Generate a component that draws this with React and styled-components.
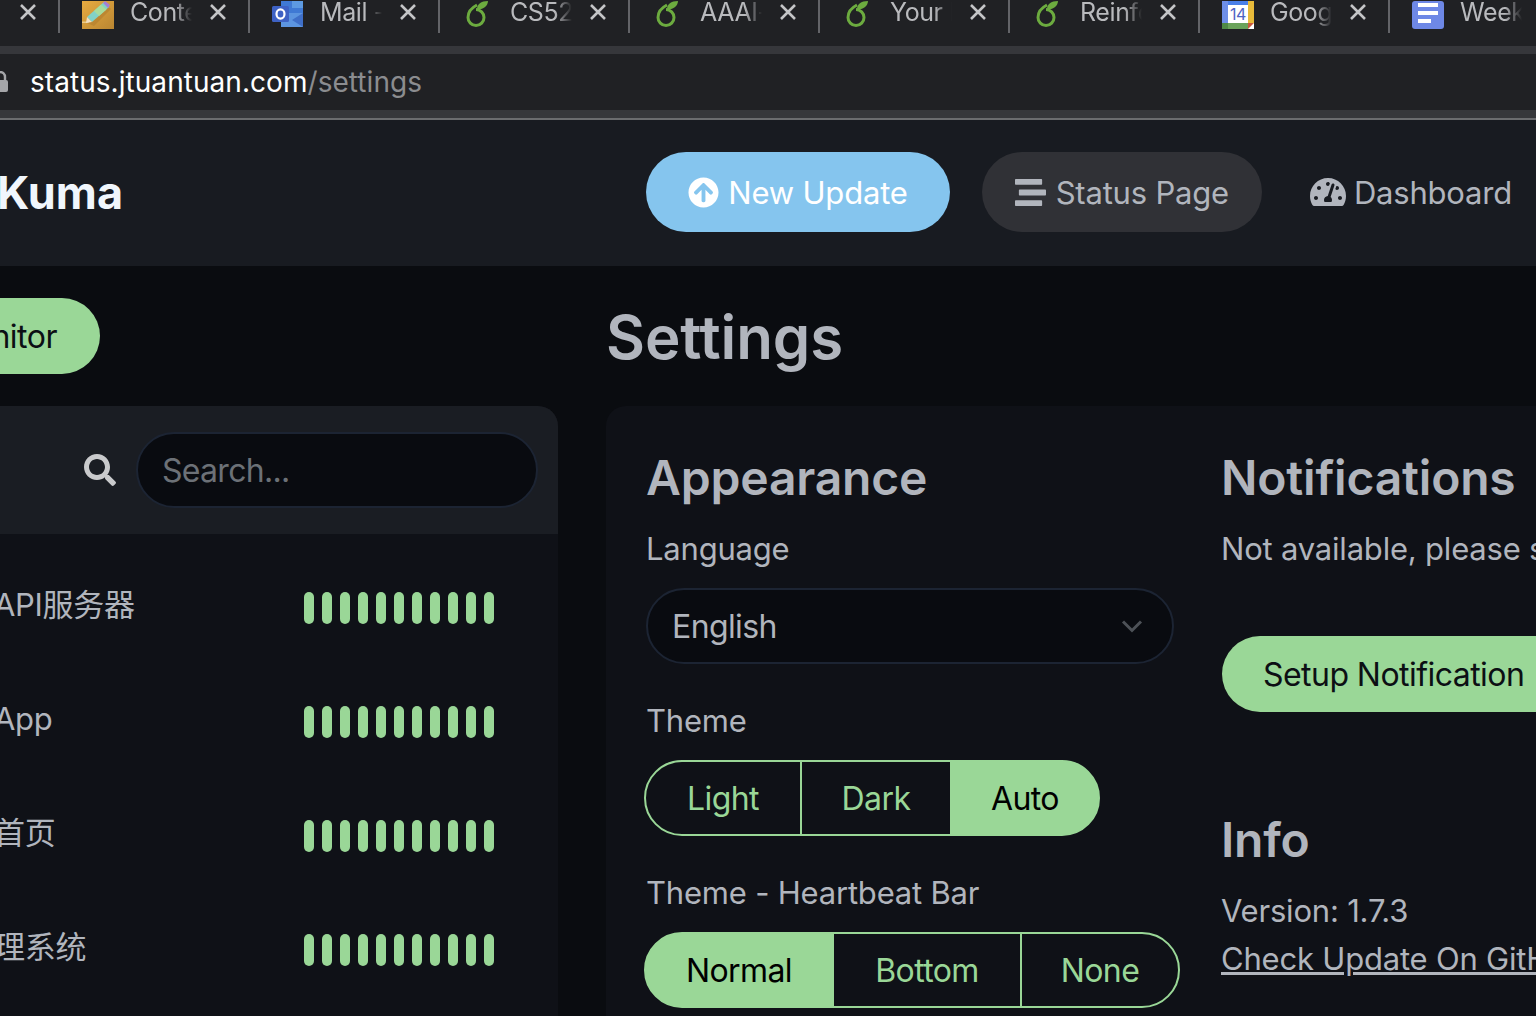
import React from "react";
import styled, { createGlobalStyle } from "styled-components";
import { FaArrowCircleUp, FaStream, FaTachometerAlt, FaSearch } from "react-icons/fa";

const GlobalStyle = createGlobalStyle`
    html, body {
        margin: 0;
        padding: 0;
        background: #0a0c10;
    }
    * {
        box-sizing: border-box;
    }
`;

const Page = styled.div`
    width: 1536px;
    height: 1016px;
    overflow: hidden;
    background: #0a0c10;
    font-family: Inter, "Noto Sans CJK SC", sans-serif;
    color: #b1b5bd;
`;

/* browser chrome */
const TabStrip = styled.div`
    height: 46px;
    background: #202124;
    display: flex;
    margin-left: -130px;
    width: 1800px;
`;

const Tab = styled.div`
    width: 190px;
    height: 33px;
    flex: none;
    display: flex;
    align-items: center;
    padding: 0 0 9px 22px;
    border-right: 2px solid #636468;
    font-size: 25px;
    letter-spacing: -0.4px;
    color: #b9babd;
`;

const TabIcon = styled.div`
    width: 32px;
    height: 32px;
    flex: none;
    margin-right: 16px;
    margin-top: 9px;
`;

const TabTitle = styled.div`
    width: 62px;
    flex: none;
    overflow: hidden;
    white-space: nowrap;
    -webkit-mask-image: linear-gradient(to right, #000 72%, transparent 100%);
    mask-image: linear-gradient(to right, #000 72%, transparent 100%);
`;

const TabClose = styled.svg`
    width: 18px;
    height: 18px;
    flex: none;
    margin-left: 17px;
`;

const Stripe = styled.div`
    height: 8px;
    background: #36373b;
`;

const UrlBar = styled.div`
    height: 56px;
    background: #202124;
    display: flex;
    align-items: center;
    padding-left: 30px;
    font-size: 28px;
    letter-spacing: 0.05px;
    color: #fff;
`;

const UrlPath = styled.span`
    color: #8b8c8f;
`;

const Lock = styled.svg`
    width: 16px;
    height: 22px;
    flex: none;
    margin-left: -38px;
    margin-right: 22px;
`;

const BottomLine = styled.div`
    height: 10px;
    background: #36373b;
    border-bottom: 2px solid #6b6c6f;
`;

/* app header */
const Header = styled.header`
    height: 146px;
    background: #181b21;
    display: flex;
    align-items: center;
    padding: 0 24px 2px 0;
`;

const Brand = styled.div`
    font-size: 45px;
    font-weight: 700;
    color: #f0f6fc;
    margin-left: -3px;
    margin-right: auto;
    letter-spacing: 0;
`;

const NavButton = styled.div`
    height: 80px;
    display: flex;
    align-items: center;
    gap: ${(p) => p.$iconGap}px;
    padding: 0 ${(p) => p.$pad}px;
    margin-left: ${(p) => p.$gap}px;
    border-radius: 40px;
    font-size: 31px;
    letter-spacing: -0.2px;
    background: ${(p) => p.$bg || "transparent"};
    color: ${(p) => p.$fg || "#b1b5bd"};
`;

/* main */
const Main = styled.main`
    display: grid;
    grid-template-columns: 558px 1fr;
    column-gap: 48px;
`;

const SideColumn = styled.div`
    display: flex;
    flex-direction: column;
`;

const AddRow = styled.div`
    height: 140px;
    padding-top: 32px;
`;

const AddButton = styled.div`
    width: 100px;
    height: 76px;
    display: flex;
    align-items: center;
    justify-content: flex-end;
    padding-right: 43px;
    border-radius: 0 38px 38px 0;
    background: #9ad797;
    color: #0c0f14;
    font-size: 32px;
    letter-spacing: -0.5px;
    white-space: nowrap;
`;

const MonitorPanel = styled.section`
    background: #0f1117;
    border-radius: 0 20px 0 0;
    height: 610px;
    overflow: hidden;
`;

const SearchBar = styled.div`
    height: 128px;
    background: #1a1d23;
    display: flex;
    align-items: center;
    justify-content: flex-end;
    padding-right: 20px;
    gap: 20px;
    color: #c9cacc;
`;

const SearchBox = styled.div`
    width: 402px;
    height: 76px;
    border-radius: 38px;
    border: 2px solid #1c2433;
    background: #090b10;
    color: #6c7177;
    font-size: 32px;
    letter-spacing: -0.7px;
    padding-left: 24px;
    display: flex;
    align-items: center;
`;

const MonitorList = styled.div`
    padding-top: 14px;
    display: flex;
    flex-direction: column;
`;

const MonitorRow = styled.div`
    height: 114px;
    display: grid;
    grid-template-columns: 304px 1fr;
    align-items: center;
    font-size: 31px;
`;

const MonitorName = styled.div`
    margin-left: -6px;
    line-height: 40px;
    letter-spacing: -0.3px;
    color: #b1b5bd;
`;

const Beats = styled.div`
    display: flex;
    gap: 8px;
    margin-top: 6px;
`;

const Beat = styled.div`
    width: 10px;
    height: 32px;
    border-radius: 5px;
    background: #9ad797;
`;

const Content = styled.div`
    min-width: 0;
`;

const PageTitle = styled.h1`
    margin: 0;
    height: 140px;
    padding-top: 33px;
    font-size: 60px;
    line-height: 76px;
    font-weight: 600;
    color: #b1b5bd;
    letter-spacing: -0.1px;
`;

const Card = styled.section`
    background: #0f1117;
    border-radius: 20px 0 0 0;
    height: 610px;
    width: 1000px;
    display: grid;
    grid-template-columns: 575px 1fr;
    padding: 40px 0 0 40px;
`;

const Column = styled.div`
    display: flex;
    flex-direction: column;
    align-items: flex-start;
`;

const Heading = styled.h2`
    margin: 0;
    font-size: 48px;
    line-height: 64px;
    font-weight: 600;
    letter-spacing: -0.2px;
    color: #b1b5bd;
    white-space: nowrap;
    margin-top: ${(p) => p.$top || 0}px;
`;

const Label = styled.div`
    font-size: 31px;
    line-height: 40px;
    letter-spacing: -0.2px;
    color: #b1b5bd;
    margin-top: ${(p) => p.$top || 0}px;
    white-space: nowrap;
`;

const Select = styled.div`
    width: 528px;
    height: 76px;
    margin-top: 19px;
    border-radius: 38px;
    border: 2px solid #1c2433;
    background: #090b10;
    color: #b1b5bd;
    font-size: 32px;
    letter-spacing: -0.6px;
    display: flex;
    align-items: center;
    justify-content: space-between;
    padding: 0 28px 0 24px;
`;

const Group = styled.div`
    display: flex;
    height: 76px;
    margin-top: 19px;
    margin-left: -2px;
`;

const Segment = styled.div`
    width: ${(p) => p.$w}px;
    display: flex;
    align-items: center;
    justify-content: center;
    font-size: 32px;
    letter-spacing: -0.6px;
    border: 2px solid #9ad797;
    margin-left: -2px;
    background: ${(p) => (p.$on ? "#9ad797" : "transparent")};
    color: ${(p) => (p.$on ? "#000" : "#9ad797")};
    &:first-child {
        margin-left: 0;
        border-radius: 38px 0 0 38px;
    }
    &:last-child {
        border-radius: 0 38px 38px 0;
    }
`;

const GreenButton = styled.div`
    height: 76px;
    width: 360px;
    margin: 67px 0 0 1px;
    border-radius: 38px;
    background: #9ad797;
    color: #0c0f14;
    font-size: 32px;
    letter-spacing: -0.55px;
    display: flex;
    align-items: center;
    padding-left: 41px;
    white-space: nowrap;
`;

const UpdateLink = styled.div`
    font-size: 31px;
    line-height: 48px;
    letter-spacing: -0.2px;
    margin-top: 4px;
    color: #b1b5bd;
    text-decoration: underline;
    white-space: nowrap;
`;

const Close = () => (
    <TabClose viewBox="0 0 18 18">
        <path d="M2 2 L16 16 M16 2 L2 16" stroke="#c4c5c7" strokeWidth="2.6" fill="none" />
    </TabClose>
);

const PencilIcon = () => (
    <svg viewBox="0 0 32 32" width="32" height="32">
        <defs>
            <linearGradient id="pencilBg" x1="0" y1="0" x2="1" y2="1">
                <stop offset="0" stopColor="#e8ab40" />
                <stop offset="1" stopColor="#b98632" />
            </linearGradient>
        </defs>
        <rect width="32" height="28" fill="url(#pencilBg)" />
        <rect y="20.5" width="7" height="1.5" fill="#eccb86" />
        <path d="M23 3 L29 8 L12 25 L5 22 Z" fill="#a9752a" opacity="0.45" />
        <path d="M22 1 L27 6 L10 21 L5 16 Z" fill="#82d2c6" />
        <path d="M19 3.5 L24.5 8.5 L17 15 L12 10 Z" fill="#a8dc9b" />
        <path d="M5 16 L10 21 L4 22 Z" fill="#f2dfc0" />
        <path d="M23 0 L28 4 L26 7 L21 2 Z" fill="#a57ed4" />
    </svg>
);

const OutlookIcon = () => (
    <svg viewBox="0 0 32 32" width="32" height="32">
        <rect x="9" y="0" width="22" height="14" fill="#3f79d4" />
        <rect x="20" y="0" width="11" height="7" fill="#5d9ae2" />
        <rect x="20" y="7" width="11" height="7" fill="#3f79d4" />
        <path d="M9 12 L31 12 L31 26 L9 26 Z" fill="#5c95e0" />
        <path d="M9 12 L20 19 L31 12 L31 26 Z" fill="#3f6fc8" />
        <rect x="0" y="5" width="17" height="16" rx="1.5" fill="#3e62c4" />
        <ellipse cx="8.5" cy="13" rx="4" ry="4.6" fill="none" stroke="#fff" strokeWidth="2.2" />
    </svg>
);

const SproutIcon = () => (
    <svg viewBox="0 0 32 32" width="32" height="32">
        <path d="M15 4 C9 7 6 11 6 16.5 A8 8 0 1 0 14 8.5" fill="none" stroke="#6cab3f" strokeWidth="3" />
        <path d="M15 8.5 C15 3 19 0 26 0 C26 5 21 8.5 15 8.5 Z" fill="#6cab3f" />
    </svg>
);

const CalendarIcon = () => (
    <svg viewBox="0 0 32 32" width="32" height="32">
        <rect width="32" height="28" fill="#fff" />
        <rect width="32" height="4" fill="#4a7fe8" />
        <rect width="6" height="22" fill="#6e8fe8" />
        <rect x="26" width="6" height="22" fill="#e8bb3a" />
        <rect y="22" width="26" height="6" fill="#6aa35a" />
        <rect y="22" width="6" height="6" fill="#4f8a46" />
        <path d="M26 22 L32 22 L26 28 Z" fill="#c9593d" />
        <text x="16" y="19" fontSize="16" fontFamily="Inter, sans-serif" textAnchor="middle" fill="#4d63c4">14</text>
    </svg>
);

const DocsIcon = () => (
    <svg viewBox="0 0 32 32" width="32" height="32">
        <rect width="32" height="28" rx="3" fill="#6e88e6" />
        <rect x="6" y="2" width="20" height="4" fill="#fff" />
        <rect x="6" y="10" width="20" height="4" fill="#fff" />
        <rect x="6" y="18" width="13" height="4" fill="#fff" />
    </svg>
);

const tabs = [
    { title: "" },
    { title: "Content", icon: <PencilIcon /> },
    { title: "Mail - Out", icon: <OutlookIcon /> },
    { title: "CS52", icon: <SproutIcon /> },
    { title: "AAAI-22", icon: <SproutIcon /> },
    { title: "Your Pro", icon: <SproutIcon /> },
    { title: "Reinforce", icon: <SproutIcon /> },
    { title: "Google", icon: <CalendarIcon /> },
    { title: "Week", icon: <DocsIcon /> },
];

const monitors = ["API服务器", "App", "首页", "理系统"];
const beats = Array.from({ length: 11 }, (_, i) => i);

const App = () => (
    <Page>
        <GlobalStyle />
        <TabStrip>
            {tabs.map((tab, i) => (
                <Tab key={i}>
                    <TabIcon>{tab.icon}</TabIcon>
                    <TabTitle>{tab.title}</TabTitle>
                    <Close />
                </Tab>
            ))}
        </TabStrip>
        <Stripe />
        <UrlBar>
            <Lock viewBox="0 0 16 22">
                <path d="M3 10 V6 a5 5 0 0 1 10 0 V10" fill="none" stroke="#a5a6a9" strokeWidth="2.4" />
                <rect y="9" width="16" height="12" rx="2" fill="#a5a6a9" />
            </Lock>
            status.jtuantuan.com<UrlPath>/settings</UrlPath>
        </UrlBar>
        <BottomLine />
        <Header>
            <Brand>Kuma</Brand>
            <NavButton $pad={42} $gap={0} $iconGap={9} $bg="#85c5ee" $fg="#fff">
                <FaArrowCircleUp size={31} />
                New Update
            </NavButton>
            <NavButton $pad={33} $gap={32} $iconGap={10} $bg="#303136">
                <FaStream size={31} />
                Status Page
            </NavButton>
            <NavButton $pad={0} $gap={48} $iconGap={8}>
                <FaTachometerAlt size={36} />
                Dashboard
            </NavButton>
        </Header>
        <Main>
            <SideColumn>
                <AddRow>
                    <AddButton>nitor</AddButton>
                </AddRow>
                <MonitorPanel>
                    <SearchBar>
                        <FaSearch size={32} />
                        <SearchBox>Search...</SearchBox>
                    </SearchBar>
                    <MonitorList>
                        {monitors.map((name) => (
                            <MonitorRow key={name}>
                                <MonitorName>{name}</MonitorName>
                                <Beats>
                                    {beats.map((b) => (
                                        <Beat key={b} />
                                    ))}
                                </Beats>
                            </MonitorRow>
                        ))}
                    </MonitorList>
                </MonitorPanel>
            </SideColumn>
            <Content>
                <PageTitle>Settings</PageTitle>
                <Card>
                    <Column>
                        <Heading>Appearance</Heading>
                        <Label $top={19}>Language</Label>
                        <Select>
                            English
                            <svg viewBox="0 0 16 16" width="24" height="24">
                                <path d="M2 5 L8 11 L14 5" fill="none" stroke="#4d5157" strokeWidth="2" />
                            </svg>
                        </Select>
                        <Label $top={37}>Theme</Label>
                        <Group>
                            <Segment $w={158}>Light</Segment>
                            <Segment $w={152}>Dark</Segment>
                            <Segment $w={150} $on>Auto</Segment>
                        </Group>
                        <Label $top={37}>Theme - Heartbeat Bar</Label>
                        <Group>
                            <Segment $w={190} $on>Normal</Segment>
                            <Segment $w={190}>Bottom</Segment>
                            <Segment $w={160}>None</Segment>
                        </Group>
                    </Column>
                    <Column>
                        <Heading>Notifications</Heading>
                        <Label $top={19}>Not available, please setup.</Label>
                        <GreenButton>Setup Notification</GreenButton>
                        <Heading $top={96}>Info</Heading>
                        <Label $top={19}>Version: 1.7.3</Label>
                        <UpdateLink>Check Update On GitHub</UpdateLink>
                    </Column>
                </Card>
            </Content>
        </Main>
    </Page>
);

export default App;
